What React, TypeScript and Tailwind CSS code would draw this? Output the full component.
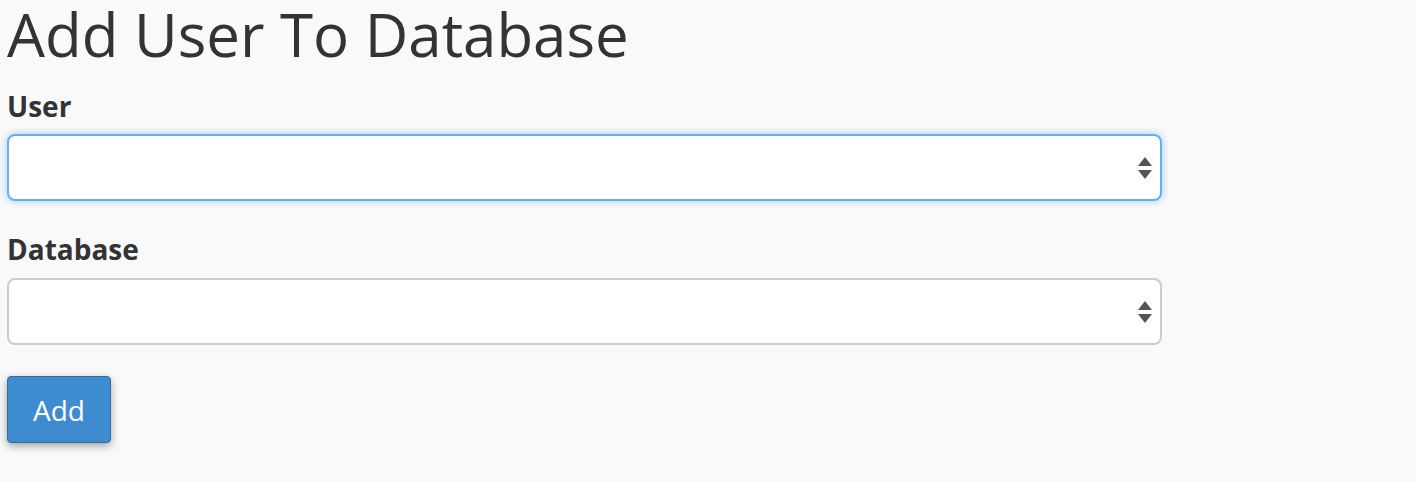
import React from "react";

function Arrows() {
  return (
    <svg width="16" height="26" viewBox="0 0 16 26" className="absolute right-[7px] top-1/2 -translate-y-1/2">
      <polygon points="8,2 15,11 1,11" fill="#555" />
      <polygon points="1,15 15,15 8,24" fill="#555" />
    </svg>
  );
}

export default function App() {
  return (
    <div className="min-h-[482px] w-full bg-[#f9f9f9] px-[7px] pt-[2px] text-[#333]" style={{ fontFamily: '"Open Sans", "Noto Sans", sans-serif' }}>
      <h1 className="text-[60px] leading-[64px] font-normal">Add User To Database</h1>
      <div className="mt-[23px] text-[28px] font-bold leading-[34px]">User</div>
      <div className="relative mt-[11px] h-[67px] w-[1155px] rounded-[8px] border-2 border-[#66afe9] bg-white shadow-[0_0_8px_rgba(102,175,233,0.6)]">
        <Arrows />
      </div>
      <div className="mt-[31px] text-[28px] font-bold leading-[34px]">Database</div>
      <div className="relative mt-[12px] h-[67px] w-[1155px] rounded-[8px] border-2 border-[#ccc] bg-white">
        <Arrows />
      </div>
      <button className="mt-[31px] flex h-[67px] w-[104px] items-center justify-center rounded-[4px] border border-[#2e6da4] bg-[#3f8bd0] text-[28px] text-white shadow-[0_3px_8px_rgba(0,0,0,0.35)]">
        Add
      </button>
    </div>
  );
}
